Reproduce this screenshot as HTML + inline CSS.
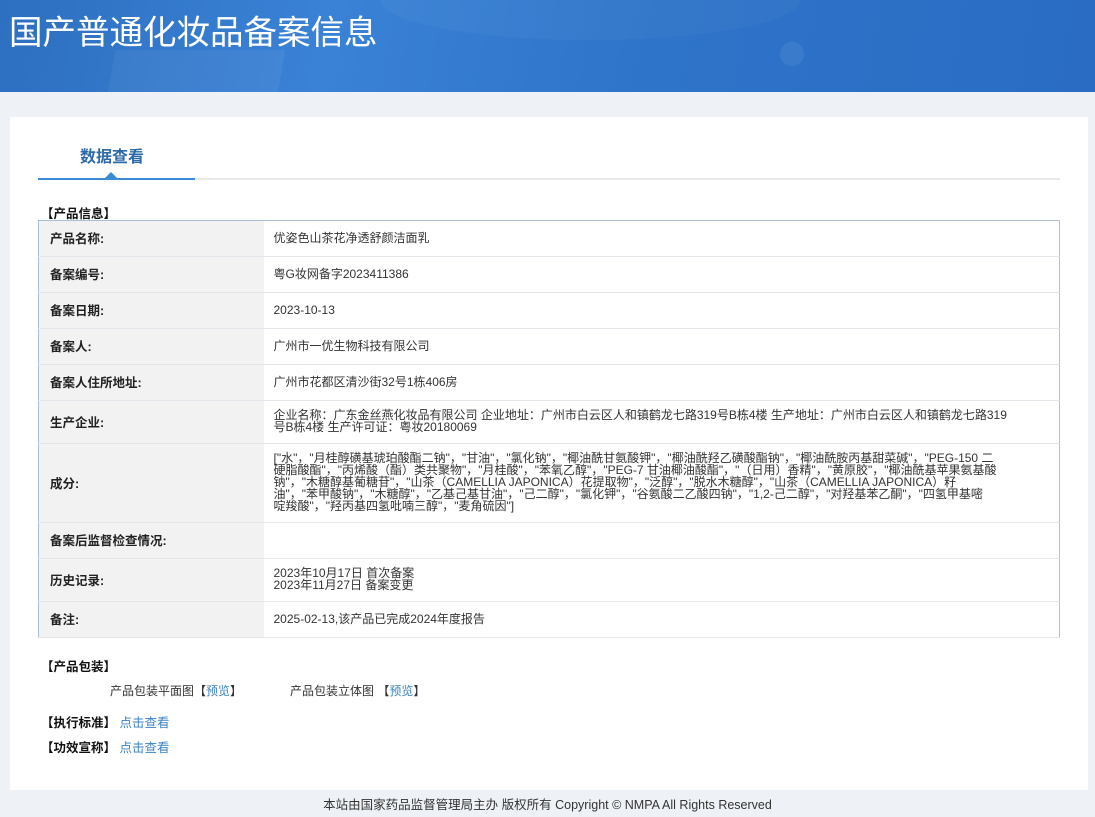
<!DOCTYPE html>
<html><head><meta charset="utf-8"><style>
*{margin:0;padding:0;box-sizing:border-box}
body{width:1095px;height:817px;overflow:hidden;background:#eef2f6;font-family:"Liberation Sans","Noto Sans CJK SC",sans-serif;font-size:12px;color:#333;position:relative}
.hd{position:absolute;left:0;top:0;width:1095px;height:92px;background:linear-gradient(100deg,#2d6fc0 0%,#3a82d6 30%,#2e74c9 60%,#2a6cc4 100%);overflow:hidden}
.hd h1{position:absolute;left:9px;top:5px;font-size:33.5px;font-weight:normal;color:#fff;font-family:"Liberation Sans","Noto Sans CJK SC",sans-serif}
.card{position:absolute;left:10px;top:117px;width:1078px;height:673px;background:#fff}
.tab{position:absolute;left:80px;top:143px;font-size:16px;font-weight:bold;color:#2e6aa8}
.line{position:absolute;left:38px;top:178px;width:1022px;height:2px;background:#e6e8ea}
.line2{position:absolute;left:38px;top:178px;width:157px;height:2px;background:#3b8ad6}
.tri{position:absolute;left:105px;top:172px;width:0;height:0;border-left:6px solid transparent;border-right:6px solid transparent;border-bottom:6px solid #3b8ad6}
.sec{position:absolute;left:41px;font-weight:bold;color:#111;font-size:12.5px}
table{position:absolute;left:38px;top:220px;width:1022px;border-collapse:collapse;border:1px solid #a9c0d8}
td{border-bottom:1px solid #e3e6ea;vertical-align:middle;padding-bottom:2px}
td.l{width:225px;background:#f2f2f2;font-weight:bold;padding-left:11px;color:#222;font-size:12.5px}
td.v{padding-left:10px;padding-right:45px;color:#333;line-height:12px}
a{color:#3b82c4;text-decoration:none}
.ft{position:absolute;top:794px;left:0;width:1095px;text-align:center;font-size:12.5px;color:#333}
</style></head><body>
<div class="hd"><h1>国产普通化妆品备案信息</h1>
<div style="position:absolute;left:110px;top:50px;width:170px;height:60px;background:rgba(255,255,255,0.05);transform:skewX(-10deg)"></div>
<div style="position:absolute;left:380px;top:-40px;width:420px;height:80px;border-radius:50%;background:rgba(255,255,255,0.03)"></div>
<div style="position:absolute;left:780px;top:42px;width:24px;height:24px;border-radius:50%;background:rgba(255,255,255,0.07)"></div>
</div>
<div class="card"></div>
<div class="tab">数据查看</div>
<div class="line"></div><div class="line2"></div><div class="tri"></div>
<div class="sec" style="top:203px">【产品信息】</div>
<table>
<tr style="height:36px"><td class="l">产品名称:</td><td class="v">优姿色山茶花净透舒颜洁面乳</td></tr>
<tr style="height:36px"><td class="l">备案编号:</td><td class="v">粤G妆网备字2023411386</td></tr>
<tr style="height:36px"><td class="l">备案日期:</td><td class="v">2023-10-13</td></tr>
<tr style="height:36px"><td class="l">备案人:</td><td class="v">广州市一优生物科技有限公司</td></tr>
<tr style="height:36px"><td class="l">备案人住所地址:</td><td class="v">广州市花都区清沙街32号1栋406房</td></tr>
<tr style="height:43px"><td class="l">生产企业:</td><td class="v">企业名称：广东金丝燕化妆品有限公司 企业地址：广州市白云区人和镇鹤龙七路319号B栋4楼 生产地址：广州市白云区人和镇鹤龙七路319<br>号B栋4楼 生产许可证：粤妆20180069</td></tr>
<tr style="height:79px"><td class="l">成分:</td><td class="v">["水"，"月桂醇磺基琥珀酸酯二钠"，"甘油"，"氯化钠"，"椰油酰甘氨酸钾"，"椰油酰羟乙磺酸酯钠"，"椰油酰胺丙基甜菜碱"，"PEG-150 二<br>硬脂酸酯"，"丙烯酸（酯）类共聚物"，"月桂酸"，"苯氧乙醇"，"PEG-7 甘油椰油酸酯"，"（日用）香精"，"黄原胶"，"椰油酰基苹果氨基酸<br>钠"，"木糖醇基葡糖苷"，"山茶（CAMELLIA JAPONICA）花提取物"，"泛醇"，"脱水木糖醇"，"山茶（CAMELLIA JAPONICA）籽<br>油"，"苯甲酸钠"，"木糖醇"，"乙基己基甘油"，"己二醇"，"氯化钾"，"谷氨酸二乙酸四钠"，"1,2-己二醇"，"对羟基苯乙酮"，"四氢甲基嘧<br>啶羧酸"，"羟丙基四氢吡喃三醇"，"麦角硫因"]</td></tr>
<tr style="height:36px"><td class="l">备案后监督检查情况:</td><td class="v"></td></tr>
<tr style="height:43px"><td class="l">历史记录:</td><td class="v">2023年10月17日 首次备案<br>2023年11月27日 备案变更</td></tr>
<tr style="height:36px"><td class="l">备注:</td><td class="v">2025-02-13,该产品已完成2024年度报告</td></tr>
</table>
<div class="sec" style="top:656px">【产品包装】</div>
<div style="position:absolute;left:110px;top:682px">产品包装平面图【<a>预览</a>】</div>
<div style="position:absolute;left:290px;top:682px">产品包装立体图 【<a>预览</a>】</div>
<div class="sec" style="top:712px">【执行标准】 <a style="font-weight:normal">点击查看</a></div>
<div class="sec" style="top:737px">【功效宣称】 <a style="font-weight:normal">点击查看</a></div>
<div class="ft">本站由国家药品监督管理局主办 版权所有 Copyright © NMPA All Rights Reserved</div>
</body></html>
